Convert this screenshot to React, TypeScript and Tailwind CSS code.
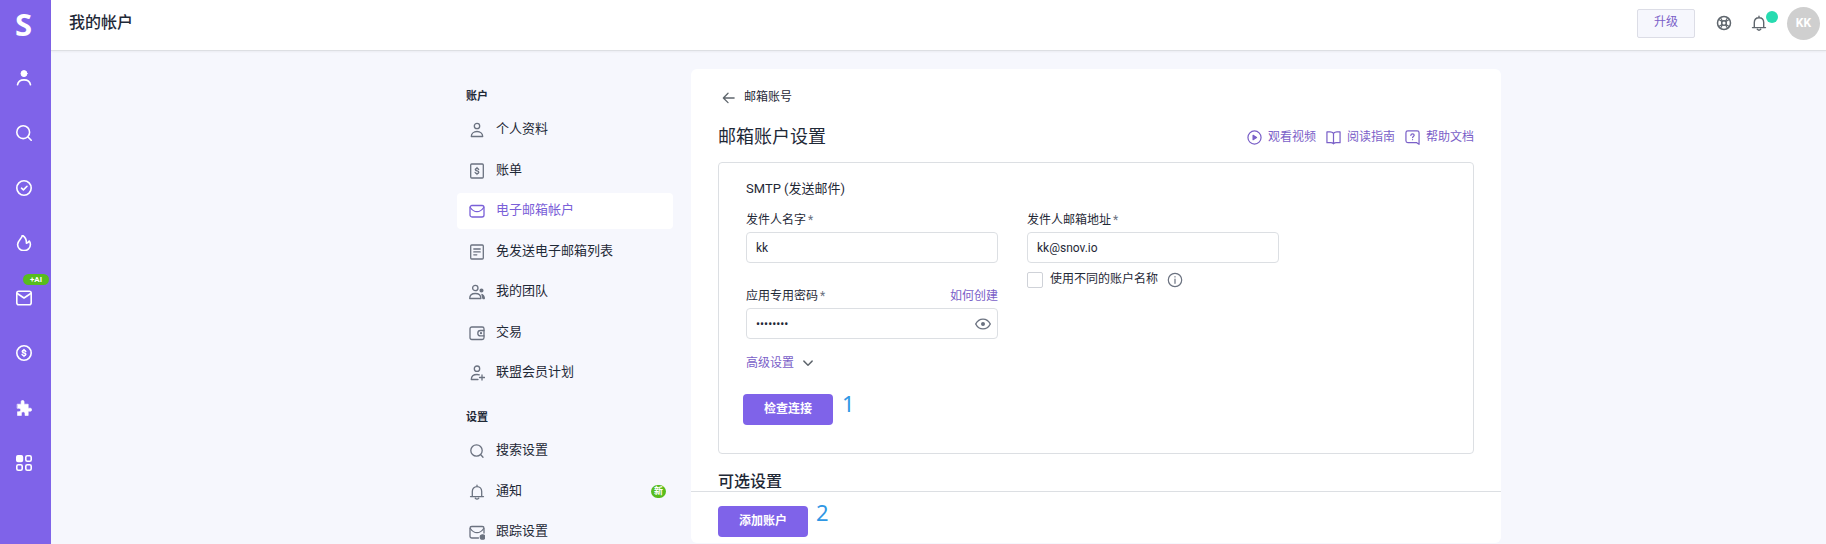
import React, { useState } from "react";

type IconProps = { children: React.ReactNode; className?: string; width?: number };

function Icon({ children, className = "size-4", width = 1.3 }: IconProps) {
  return (
    <svg
      viewBox="0 0 16 16"
      className={`shrink-0 ${className}`}
      fill="none"
      stroke="currentColor"
      strokeWidth={width}
      strokeLinecap="round"
      strokeLinejoin="round"
      aria-hidden="true"
    >
      {children}
    </svg>
  );
}

const dollar = (
  <path d="M9.7 6.5C9.5 5.8 8.8 5.4 8 5.4c-1 0-1.700.5-1.700 1.200C6.300 8.300 9.800 7.500 9.800 9.300c0 .8-.8 1.300-1.800 1.300s-1.700-.5-1.900-1.200M8 4.500v1M8 10.500v1" />
);

const railItems = [
  {
    label: "潜在客户",
    icon: (
      <>
        <circle cx="8" cy="3.600" r="3" fill="currentColor" strokeWidth="1" />
        <path d="M1.500 14.800C2 11.800 4.500 9.900 8 9.900s6 1.900 6.500 4.900" />
      </>
    ),
  },
  { label: "搜索", icon: (<><circle cx="7.200" cy="7.200" r="6.400" /><path d="m12 12 3.200 3.200" /></>) },
  { label: "验证", icon: (<><circle cx="8" cy="8" r="7.200" /><path d="m5.500 8.200 1.900 1.700 3.600-3.600" /></>) },
  {
    label: "预热",
    icon: (
      <path d="M6.300.2c.2 3.100-4.700 5.300-4.700 9.400 0 3.400 2.800 6 6.400 6s6.400-2.600 6.400-6c0-1.300-.3-2.500-1.100-3.600-.8 1.200-1.700 2-2.900 2.200C10.600 5 9.300 1.900 6.300.2Z" />
    ),
  },
  { label: "邮件活动", badge: "+AI", icon: (<><rect x=".8" y="1.200" width="14.400" height="13.600" rx="2" /><path d="m1.300 3.500 6.700 4.500 6.700-4.500" /></>) },
  { label: "交易", icon: (<><circle cx="8" cy="8" r="7.200" />{dollar}</>) },
  {
    label: "集成",
    icon: (
      <path
        d="M1.500 4.200h3.600V2c0-1 .6-1.700 1.500-1.700S8.100 1 8.100 2v2.200h4.100v4h1.900c1 0 1.700.6 1.700 1.500s-.7 1.500-1.700 1.500h-1.900v4.300H9v-1.700c0-1.200-.7-2-1.800-2s-1.800.8-1.800 2v1.700H1.500v-3.800h1.300c1.200 0 1.900-.7 1.900-1.700s-.7-1.700-1.900-1.700H1.500Z"
        fill="currentColor"
        strokeWidth=".6"
      />
    ),
  },
  {
    label: "应用",
    icon: (
      <>
        <rect x=".8" y=".8" width="5.600" height="5.600" rx="1.200" fill="currentColor" />
        <rect x="9.800" y=".8" width="5.400" height="5.400" rx="1.500" />
        <rect x=".8" y="9.800" width="5.400" height="5.400" rx="1.500" />
        <rect x="9.800" y="9.800" width="5.400" height="5.400" rx="1.500" />
      </>
    ),
  },
];

const person = (
  <>
    <circle cx="8" cy="4" r="2.700" />
    <path d="M2.300 14.500c0-3 2.400-5 5.700-5s5.700 2 5.700 5Z" />
  </>
);
const bell = (
  <path d="M1.500 12.600h13M3.300 12.400V7.600c0-2.900 1.900-4.900 4.700-4.900s4.700 2 4.700 4.900v4.800M8 2.500V1.200M6.300 14.300c.9.900 2.500.9 3.400 0" />
);
const magnifier = (<><circle cx="7.500" cy="7.500" r="5.700" /><path d="m11.800 11.800 2.200 2.500" /></>);

type MenuItem = { label: string; icon: React.ReactNode; active?: boolean; badge?: string };

const accountItems: MenuItem[] = [
  { label: "个人资料", icon: person },
  { label: "账单", icon: (<><rect x="1.700" y="1" width="12.600" height="14" rx="1" />{dollar}</>) },
  { label: "电子邮箱帐户", active: true, icon: (<><rect x="1" y="2.500" width="14" height="11.500" rx="2" /><path d="M1.300 4.500C3 7 5.500 8.700 8 8.700s5-1.700 6.700-4.200" /></>) },
  { label: "免发送电子邮箱列表", icon: (<><rect x="1.700" y="1" width="12.600" height="14" rx="1" /><path d="M4.800 5h6.400M4.800 7.900h6.400M4.800 10.800h3" /></>) },
  {
    label: "我的团队",
    icon: (
      <>
        <circle cx="6.300" cy="4" r="2.700" />
        <path d="M.7 14.500c0-3 2.300-5 5.600-5s5.600 2 5.600 5Z" />
        <circle cx="12.500" cy="6.500" r="1.400" fill="currentColor" />
        <path d="M13 10.500c1.600.6 2.300 2 2.300 4h-1.300Z" fill="currentColor" />
      </>
    ),
  },
  {
    label: "交易",
    icon: (
      <>
        <rect x="1" y="2" width="14" height="12.500" rx="1.800" />
        <path d="M15 5.500h-3.500C9.800 5.500 8.800 6.600 8.800 8.200s1 2.700 2.700 2.700H15" />
        <circle cx="12" cy="8.200" r=".5" fill="currentColor" />
      </>
    ),
  },
  {
    label: "联盟会员计划",
    icon: (
      <>
        <circle cx="8" cy="3.700" r="2.700" />
        <path d="M9 14.500H2.300c0-3 2.300-5 5.700-5 .9 0 1.600.1 2.300.3M13 10v5M10.500 12.500h5" />
      </>
    ),
  },
];

const settingItems: MenuItem[] = [
  { label: "搜索设置", icon: magnifier },
  { label: "通知", icon: bell, badge: "新" },
  {
    label: "跟踪设置",
    icon: (
      <>
        <path d="M9.500 14H2.800C1.800 14 1 13.200 1 12.200V4.300c0-1 .8-1.800 1.800-1.800h10.400c1 0 1.800.8 1.800 1.800V9" />
        <path d="M1.300 4.500C3 7 5.500 8.700 8 8.700s5-1.700 6.700-4.200" />
        <circle cx="13.500" cy="13" r="2.200" fill="currentColor" />
      </>
    ),
  },
];

function Menu({ items, className }: { items: MenuItem[]; className: string }) {
  return (
    <ul className={`flex flex-col justify-between ${className}`}>
      {items.map((item) => (
        <li key={item.label}>
          <a
            href="#"
            className={`flex h-9 items-center rounded pr-[7px] pl-3 text-[13px] ${
              item.active ? "bg-white text-[#7a60d8]" : "text-[#1f2937]"
            }`}
          >
            <Icon className={`size-4 ${item.active ? "" : "text-[#6b7280]"}`}>{item.icon}</Icon>
            <span className="ml-[11px] flex-1 pb-0.5">{item.label}</span>
            {item.badge && (
              <span className="rounded-full bg-[#57bd1d] px-[3px] text-[9px] leading-[13px] font-bold text-white">
                {item.badge}
              </span>
            )}
          </a>
        </li>
      ))}
    </ul>
  );
}

const helpLinks = [
  { label: "观看视频", icon: (<><circle cx="8" cy="8" r="7" /><path d="M6.500 5.700v4.600L10.200 8Z" fill="currentColor" /></>) },
  { label: "阅读指南", icon: <path d="M8 3.500C7 2.400 5.800 2 4.300 2H1v11.500h4c1.300 0 2.300.4 3 1.300.7-.9 1.700-1.300 3-1.300h4V2h-3.300C10.200 2 9 2.400 8 3.500Zm0 0v11" /> },
  {
    label: "帮助文档",
    icon: (
      <>
        <path d="M15 15.300 12.500 13.500H3c-1.100 0-2-.9-2-2V3c0-1.100.9-2 2-2h10c1.100 0 2 .9 2 2Z" />
        <path d="M6.200 5.700c.1-1 .8-1.600 1.800-1.600s1.800.6 1.800 1.500c0 1.200-1.700 1.300-1.700 2.500M8.100 10.300v.1" />
      </>
    ),
  },
];

const inputClass =
  "h-[31px] w-full rounded border border-[#dcdfe3] bg-white px-[9px] text-xs text-[#1f2937] outline-none focus:border-[#7f63e9]";
const primaryClass =
  "h-[31px] w-[90px] shrink-0 rounded bg-[#7f63e9] pb-0.5 text-xs font-bold text-white hover:bg-[#6f53d9]";

function Label({ htmlFor, children }: { htmlFor: string; children: React.ReactNode }) {
  return (
    <label htmlFor={htmlFor} className="flex gap-0.5">
      {children}
      <span className="text-[#6b7280]">*</span>
    </label>
  );
}

export default function App() {
  const [visible, setVisible] = useState(false);

  return (
    <div className="flex h-screen overflow-hidden bg-[#f6f7fd] font-[Roboto,'Noto_Sans_CJK_SC',sans-serif] text-[#1f2937]">
      <nav className="flex w-[51px] shrink-0 flex-col bg-[#7f63e9] pr-1 text-white">
        <a
          href="#"
          aria-label="首页"
          className="flex h-[50px] shrink-0 items-center justify-center pb-0.5 font-['Noto_Sans'] text-[31px] leading-none font-bold"
        >
          S
        </a>
        {railItems.map((item) => (
          <a key={item.label} href="#" aria-label={item.label} className="relative flex h-[55px] shrink-0 items-center justify-center">
            <Icon width={1.6}>{item.icon}</Icon>
            {item.badge && (
              <span className="absolute top-1 -right-0.5 rounded-full bg-[#57bd1d] px-[7px] text-[8px] leading-[11px] font-bold">
                {item.badge}
              </span>
            )}
          </a>
        ))}
      </nav>

      <div className="flex min-w-0 flex-1 flex-col">
        <header className="flex h-[51px] shrink-0 items-center border-b border-[#dddfe3] bg-white pr-1.5 pb-1 pl-[18px] shadow-xs">
          <h1 className="flex-1 text-base font-medium">我的帐户</h1>
          <button className="h-[29px] w-[58px] rounded-xs border border-[#dcdde6] bg-[#f6f7fd] pb-0.5 text-xs text-[#7a60c8]">升级</button>
          <button aria-label="帮助" className="ml-[21px] text-[#5f666d]">
            <Icon className="size-4" width={1.5}>
              <circle cx="8" cy="8" r="6.500" />
              <circle cx="8" cy="8" r="2.300" />
              <path d="m3.200 4.800 2.800 1.600M4.800 3.200l1.600 2.800M12.800 4.800 10 6.400M11.200 3.200 9.600 6M3.200 11.200 6 9.600M4.800 12.800 6.400 10M12.800 11.200 10 9.600M11.200 12.800 9.600 10" strokeWidth="1.100" />
            </Icon>
          </button>
          <button aria-label="通知" className="relative ml-[19px] text-[#5f666d]">
            <Icon width={1.4}>{bell}</Icon>
            <span className="absolute -top-1 left-[15px] size-3 rounded-full bg-[#27dbb0]" />
          </button>
          <button aria-label="帐户菜单" className="ml-5 size-[33px] rounded-full bg-[#cfcfcf] text-xs font-bold text-white">KK</button>
        </header>

        <div className="flex min-h-0 flex-1 justify-center pt-[18px] pl-[81px]">
          <aside className="mr-[18px] w-[216px] shrink-0 pt-5">
            <h2 className="pl-[9px] text-[11px] leading-4 font-bold">账户</h2>
            <Menu items={accountItems} className="mt-[7px] h-[279px]" />
            <h2 className="mt-[19px] pl-[9px] text-[11px] leading-4 font-bold">设置</h2>
            <Menu items={settingItems} className="mt-[7px] h-[117px]" />
          </aside>

          <main className="mb-px flex w-[810px] flex-col overflow-hidden rounded-md bg-white">
            <div className="min-h-0 flex-1 overflow-hidden px-[27px] pt-[18px]">
              <a href="#" className="flex h-5 items-center gap-2 pl-[3px] text-xs">
                <Icon className="size-[15px] text-[#5f666d]" width={1.4}>
                  <path d="M14 8.500H3M7.500 3.500l-5 5 5 5" />
                </Icon>
                <span>邮箱账号</span>
              </a>
              <div className="mt-4 flex h-7 items-center">
                <h2 className="flex-1 text-lg leading-7">邮箱账户设置</h2>
                <div className="flex gap-[10px] text-xs text-[#7a60c8]">
                  {helpLinks.map((link) => (
                    <a key={link.label} href="#" className="flex items-center gap-1.5">
                      <Icon className="size-[15px]">{link.icon}</Icon>
                      {link.label}
                    </a>
                  ))}
                </div>
              </div>

              <form className="mt-[11px] rounded border border-[#dcdfe3] px-[27px] pt-4 pb-7" onSubmit={(e) => e.preventDefault()}>
                <h3 className="text-[13px] leading-5">SMTP (发送邮件)</h3>
                <div className="mt-[11px] flex gap-[29px] text-xs leading-5">
                  <div className="w-[252px]">
                    <Label htmlFor="sender">发件人名字</Label>
                    <input id="sender" className={`mt-0.5 ${inputClass}`} defaultValue="kk" />
                    <div className="mt-[23px] flex justify-between">
                      <Label htmlFor="password">应用专用密码</Label>
                      <a href="#" className="text-[#7a60c8]">如何创建</a>
                    </div>
                    <div className="relative mt-0.5">
                      <input id="password" type={visible ? "text" : "password"} className={inputClass} defaultValue="abcdefgh" />
                      <button
                        type="button"
                        aria-label="显示密码"
                        onClick={() => setVisible(!visible)}
                        className="absolute inset-y-0 right-[7px] text-[#6b7280]"
                      >
                        <Icon width={1.4}>
                          <path d="M.7 8C2.300 4.900 4.900 3.100 8 3.100S13.700 4.900 15.300 8C13.700 11.100 11.100 12.900 8 12.900S2.300 11.100.7 8Z" />
                          <circle cx="8" cy="8" r="1.300" fill="currentColor" />
                        </Icon>
                      </button>
                    </div>
                    <button type="button" className="mt-3.5 flex items-center gap-2 text-[#7a60c8]">
                      高级设置
                      <Icon className="size-3 text-[#5f666d]" width={1.9}>
                        <path d="m2.500 5.500 5.500 5.500 5.500-5.500" />
                      </Icon>
                    </button>
                  </div>
                  <div className="w-[252px]">
                    <Label htmlFor="email">发件人邮箱地址</Label>
                    <input id="email" className={`mt-0.5 ${inputClass}`} defaultValue="kk@snov.io" />
                    <div className="mt-1.5 flex items-center">
                      <label className="flex items-center gap-[7px]">
                        <input type="checkbox" className="size-4 appearance-none rounded-xs border border-[#cfd2d8] bg-white checked:bg-[#7f63e9]" />
                        <span className="pb-0.5">使用不同的账户名称</span>
                      </label>
                      <Icon className="ml-[9px] size-4 text-[#6b7280]" width={1.2}>
                        <circle cx="8" cy="8" r="6.700" />
                        <path d="M8 7v4.300M8 4.700v.2" />
                      </Icon>
                    </div>
                  </div>
                </div>
                <div className="mt-[21px] -ml-[3px] flex gap-[9px]">
                  <button type="submit" className={primaryClass}>检查连接</button>
                  <span className="font-['Noto_Sans'] text-[22px] leading-[19px] text-[#2f97e4]">1</span>
                </div>
              </form>

              <h2 className="mt-4 text-base font-medium">可选设置</h2>
            </div>

            <footer className="flex shrink-0 gap-2 border-t border-[#dcdfe3] px-[27px] pt-3.5 pb-1.5">
              <button className={primaryClass}>添加账户</button>
              <span className="font-['Noto_Sans'] text-[22px] leading-3 text-[#2f97e4]">2</span>
            </footer>
          </main>
        </div>
      </div>
    </div>
  );
}
